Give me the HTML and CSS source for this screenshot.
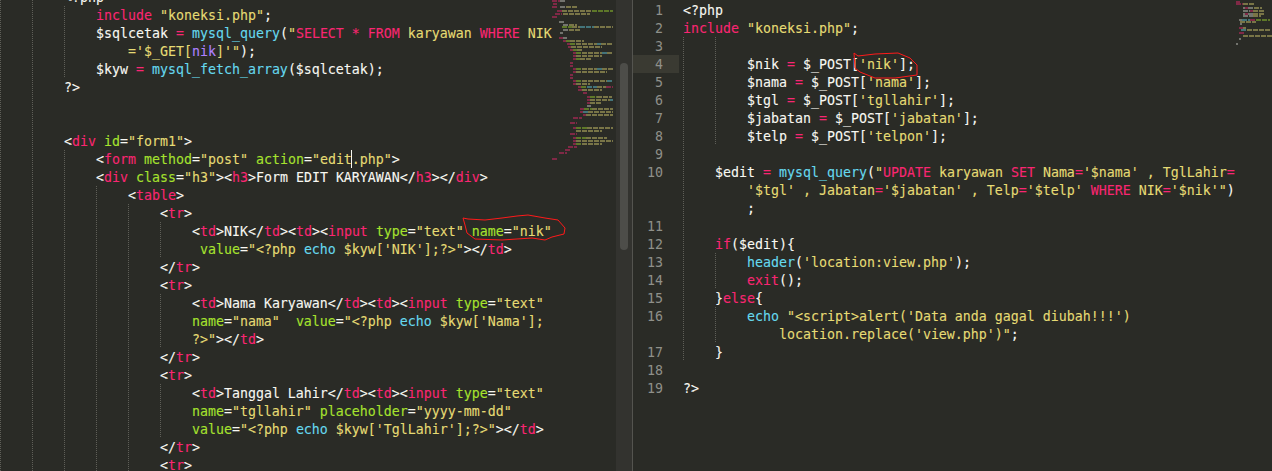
FILE: index.html
```html
<!DOCTYPE html>
<html lang="id">
<head>
<meta charset="utf-8">
<title>koneksi.php</title>
<link rel="stylesheet" href="styles.css">
</head>
<body>
<div class="editor">
<section class="pane pane-left">
<div class="code code-left">
<div class="ln g2">        &lt;?php</div>
<div class="ln g3">            <span class="p">include</span> <span class="y">"koneksi.php"</span>;</div>
<div class="ln g3">            $sqlcetak <span class="p">=</span> <span class="c">mysql_query</span>(<span class="y">"</span><span class="p">SELECT * FROM</span><span class="y"> karyawan </span><span class="p">WHERE</span><span class="y"> NIK</span></div>
<div class="ln g3">                <span class="y">='$_GET[</span><span class="u">nik</span><span class="y">]'"</span>);</div>
<div class="ln g3">            $kyw <span class="p">=</span> <span class="c">mysql_fetch_array</span>($sqlcetak);</div>
<div class="ln g2">        ?&gt;</div>
<div class="ln g2"> </div>
<div class="ln g2"> </div>
<div class="ln g2">        &lt;<span class="p">div</span> <span class="g">id</span>=<span class="y">"form1"</span>&gt;</div>
<div class="ln g3">            &lt;<span class="p">form</span> <span class="g">method</span>=<span class="y">"post"</span> <span class="g">action</span>=<span class="y">"edit.php"</span>&gt;</div>
<div class="ln g3">            &lt;<span class="p">div</span> <span class="g">class</span>=<span class="y">"h3"</span>&gt;&lt;<span class="p">h3</span>&gt;Form EDIT KARYAWAN&lt;/<span class="p">h3</span>&gt;&lt;/<span class="p">div</span>&gt;</div>
<div class="ln g4">                &lt;<span class="p">table</span>&gt;</div>
<div class="ln g5">                    &lt;<span class="p">tr</span>&gt;</div>
<div class="ln g6">                        &lt;<span class="p">td</span>&gt;NIK&lt;/<span class="p">td</span>&gt;&lt;<span class="p">td</span>&gt;&lt;<span class="p">input</span> <span class="g">type</span>=<span class="y">"text"</span> <span class="g">name</span>=<span class="y">"nik"</span></div>
<div class="ln g6">                         <span class="g">value</span>=<span class="y">"&lt;?php </span><span class="c">echo</span><span class="y"> $kyw['NIK'];?&gt;"</span>&gt;&lt;/<span class="p">td</span>&gt;</div>
<div class="ln g5">                    &lt;/<span class="p">tr</span>&gt;</div>
<div class="ln g5">                    &lt;<span class="p">tr</span>&gt;</div>
<div class="ln g6">                        &lt;<span class="p">td</span>&gt;Nama Karyawan&lt;/<span class="p">td</span>&gt;&lt;<span class="p">td</span>&gt;&lt;<span class="p">input</span> <span class="g">type</span>=<span class="y">"text"</span></div>
<div class="ln g6">                        <span class="g">name</span>=<span class="y">"nama"</span>  <span class="g">value</span>=<span class="y">"&lt;?php </span><span class="c">echo</span><span class="y"> $kyw['Nama'];</span></div>
<div class="ln g6">                        <span class="y">?&gt;"</span>&gt;&lt;/<span class="p">td</span>&gt;</div>
<div class="ln g5">                    &lt;/<span class="p">tr</span>&gt;</div>
<div class="ln g5">                    &lt;<span class="p">tr</span>&gt;</div>
<div class="ln g6">                        &lt;<span class="p">td</span>&gt;Tanggal Lahir&lt;/<span class="p">td</span>&gt;&lt;<span class="p">td</span>&gt;&lt;<span class="p">input</span> <span class="g">type</span>=<span class="y">"text"</span></div>
<div class="ln g6">                        <span class="g">name</span>=<span class="y">"tgllahir"</span> <span class="g">placeholder</span>=<span class="y">"yyyy-mm-dd"</span></div>
<div class="ln g6">                        <span class="g">value</span>=<span class="y">"&lt;?php </span><span class="c">echo</span><span class="y"> $kyw['TglLahir'];?&gt;"</span>&gt;&lt;/<span class="p">td</span>&gt;</div>
<div class="ln g5">                    &lt;/<span class="p">tr</span>&gt;</div>
<div class="ln g5">                    &lt;<span class="p">tr</span>&gt;</div>
</div>
<svg class="caret" width="1" height="18" aria-hidden="true"><rect width="1" height="18" fill="#f8f8f0"/></svg>
<svg class="minimap" width="63" height="165" viewBox="0 0 63 165" aria-hidden="true">
<path class="mm-p" d="M0 1h8M1 4h4M0 7h6M5 11h5M3 14h7M0 17h5M7 38h4M11 41h3M15 44h3M16 47h3M18 50h3M21 53h3M21 56h3M21 59h3M18 63h3M18 66h3M21 69h3M21 72h3M18 75h3M18 78h3M21 81h3M21 84h3M26 87h3M54 87h7M26 90h4M31 93h4M35 97h3M35 100h3M35 103h3M28 109h4M28 112h3M31 115h3M21 118h9M18 123h7M21 128h3M18 134h7M21 138h3M21 141h3M21 144h3M16 147h9M13 150h5M7 153h8M0 159h6"/>
<path class="mm-w" d="M8 1h5M8 7h6M7 22h5M11 25h6M8 33h3M11 38h4M11 30h6M35 106h4"/>
<path class="mm-y" d="M14 7h12M10 11h30M11 14h27M17 25h8M20 27h8M42 27h19M17 30h11M18 41h14M24 44h21M49 44h12M19 47h31M25 50h6M30 53h20M55 53h6M24 56h26M28 59h12M30 69h15M50 69h11M24 72h31M30 81h25M24 84h14M45 87h9M30 90h20M45 97h15M38 100h20M38 103h12M40 109h21M36 112h25M34 115h27M35 128h26M24 131h26M34 138h21M24 141h37M30 144h20"/>
<path class="mm-g" d="M40 11h21M10 27h10M14 41h4M18 44h6M21 50h4M24 53h6M24 59h4M24 69h6M24 81h6M29 87h6M38 97h7M32 109h8M24 128h11M24 138h10M24 144h6"/>
<path class="mm-c" d="M28 27h14M45 44h4M50 53h5M45 69h5M55 81h6M35 87h10M58 100h3M31 112h5"/>
</svg>
<div class="scrollbar"><div class="thumb"></div></div>
</section>
<section class="pane pane-right">
<div class="gutter">
<div class="num">1</div><div class="num">2</div><div class="num">3</div><div class="num active">4</div><div class="num">5</div><div class="num">6</div><div class="num">7</div><div class="num">8</div><div class="num">9</div><div class="num">10</div><div class="num"> </div><div class="num"> </div><div class="num">11</div><div class="num">12</div><div class="num">13</div><div class="num">14</div><div class="num">15</div><div class="num">16</div><div class="num"> </div><div class="num">17</div><div class="num">18</div><div class="num">19</div>
</div>
<div class="code code-right">
<div class="ln">&lt;?php</div>
<div class="ln"><span class="p">include</span> <span class="y">"koneksi.php"</span>;</div>
<div class="ln g2"> </div>
<div class="ln g2">        $nik <span class="p">=</span> $_POST[<span class="y">'nik'</span>];</div>
<div class="ln g2">        $nama <span class="p">=</span> $_POST[<span class="y">'nama'</span>];</div>
<div class="ln g2">        $tgl <span class="p">=</span> $_POST[<span class="y">'tgllahir'</span>];</div>
<div class="ln g2">        $jabatan <span class="p">=</span> $_POST[<span class="y">'jabatan'</span>];</div>
<div class="ln g2">        $telp <span class="p">=</span> $_POST[<span class="y">'telpon'</span>];</div>
<div class="ln g1"> </div>
<div class="ln g1">    $edit <span class="p">=</span> <span class="c">mysql_query</span>(<span class="y">"</span><span class="p">UPDATE</span><span class="y"> karyawan </span><span class="p">SET</span><span class="y"> Nama</span><span class="p">=</span><span class="y">'$nama' , TglLahir</span><span class="p">=</span></div>
<div class="ln g1">        <span class="y">'$tgl' , Jabatan</span><span class="p">=</span><span class="y">'$jabatan' , Telp</span><span class="p">=</span><span class="y">'$telp' </span><span class="p">WHERE</span><span class="y"> NIK</span><span class="p">=</span><span class="y">'$nik'"</span>)</div>
<div class="ln g1">        ;</div>
<div class="ln g1"> </div>
<div class="ln g1">    <span class="p">if</span>($edit){</div>
<div class="ln g2">        <span class="c">header</span>(<span class="y">'location:view.php'</span>);</div>
<div class="ln g2">        <span class="p">exit</span>();</div>
<div class="ln g1">    }<span class="p">else</span>{</div>
<div class="ln g2">        <span class="c">echo</span> <span class="y">"&lt;script&gt;alert('Data anda gagal diubah!!!')</span></div>
<div class="ln g2">            <span class="y">location.replace('view.php')"</span>;</div>
<div class="ln g1">    }</div>
<div class="ln"> </div>
<div class="ln">?&gt;</div>
</div>
<svg class="minimap-right" width="36" height="48" viewBox="0 0 36 48" aria-hidden="true">
<path class="mm-p" d="M0 2h4M0 4h7M9 8h3M14 11h3M9 14h3M14 20h6M3 28h4M3 33h5"/>
<path class="mm-w" d="M7 8h2M12 8h6M7 11h7M7 14h2M12 14h5M7 16h10M3 20h3M4 24h2M3 39h2M0 44h2"/>
<path class="mm-y" d="M7 4h12M18 8h8M17 11h11M17 14h12M17 16h8M4 22h16M7 28h3M11 30h23M7 36h29"/>
<path class="mm-g" d="M20 20h14"/>
<path class="mm-c" d="M6 20h8M5 30h6"/>
</svg>
</section>
<svg class="ink" width="1272" height="471" viewBox="0 0 1272 471" aria-hidden="true">
<path d="M463 218L468 219L485 220L502 218L517 216L528 215L545 218L558 220L565 228L564 234L552 237L545 240L532 238L502 240L475 239L467 233L465 225Z"/>
<path d="M854 53L855 68L860 72L875 78L895 78L917 75L917 65L910 58L898 53L875 54L858 56L854 53"/>
</svg>
</div>
</body>
</html>
```
FILE: styles.css
```css
html, body {
  margin: 0;
  padding: 0;
  background: #2a2b26;
}
.editor {
  position: relative;
  display: flex;
  width: 1272px;
  height: 471px;
  overflow: hidden;
  background: #2a2b26;
  color: #f8f8f2;
  font-family: "DejaVu Sans Mono", monospace;
  font-size: 13.29px;
  line-height: 20px;
  -webkit-text-stroke: .1px;
}
.pane {
  position: relative;
  display: flex;
  height: 471px;
}
.pane-left {
  width: 632px;
  flex: none;
}
.pane-right {
  flex: 1;
  min-width: 0;
  border-left: 1px solid #54544f;
}
.code {
  flex: 1;
  min-width: 0;
}
.code-left {
  margin-top: -12px;
  width: 552px;
}
.code-right {
  margin-top: 1px;
  margin-left: 4px;
}
.ln {
  height: 18px;
  white-space: pre;
  background-repeat: no-repeat;
  background-size: 1px 18px;
  --d: repeating-linear-gradient(to bottom, #5f5f58 0 1px, transparent 1px 2px);
}
.g1 { background-image: var(--d); background-position: 0 0; }
.g2 { background-image: var(--d), var(--d); background-position: 0 0, 32px 0; }
.g3 { background-image: var(--d), var(--d), var(--d); background-position: 0 0, 32px 0, 64px 0; }
.g4 { background-image: var(--d), var(--d), var(--d), var(--d); background-position: 0 0, 32px 0, 64px 0, 96px 0; }
.g5 { background-image: var(--d), var(--d), var(--d), var(--d), var(--d); background-position: 0 0, 32px 0, 64px 0, 96px 0, 128px 0; }
.g6 { background-image: var(--d), var(--d), var(--d), var(--d), var(--d), var(--d); background-position: 0 0, 32px 0, 64px 0, 96px 0, 128px 0, 160px 0; }
.p { color: #f92672; }
.y { color: #e6db74; }
.g { color: #a6e22e; }
.c { color: #66d9ef; }
.u { color: #ae81ff; }
.caret {
  position: absolute;
  left: 351px;
  top: 150px;
}
.minimap {
  flex: none;
  display: block;
  margin-right: 1px;
}
.minimap path, .minimap-right path {
  fill: none;
  stroke-width: 2;
  stroke-dasharray: 5 1;
  opacity: .42;
}
.mm-p { stroke: #f92672; }
.mm-w { stroke: #d8d8d2; }
.mm-y { stroke: #e6db74; }
.mm-g { stroke: #a6e22e; }
.mm-c { stroke: #66d9ef; }
.scrollbar {
  flex: none;
  width: 16px;
  height: 471px;
  background: #33332f;
  box-sizing: border-box;
  padding: 63px 4px 0;
}
.thumb {
  width: 8px;
  height: 187px;
  background: #4d4d49;
  border-radius: 4px;
}
.gutter {
  flex: none;
  width: 46px;
  margin-top: 1px;
}
.num {
  height: 18px;
  box-sizing: border-box;
  padding-right: 16px;
  text-align: right;
  color: #8f908a;
  -webkit-text-stroke: 0;
}
.active {
  background: #3a3a32;
}
.minimap-right {
  flex: none;
  display: block;
}
.ink {
  position: absolute;
  left: 0;
  top: 0;
  pointer-events: none;
}
.ink path {
  fill: none;
  stroke: #ff1a1a;
  stroke-width: 1;
  stroke-linejoin: round;
}
```
